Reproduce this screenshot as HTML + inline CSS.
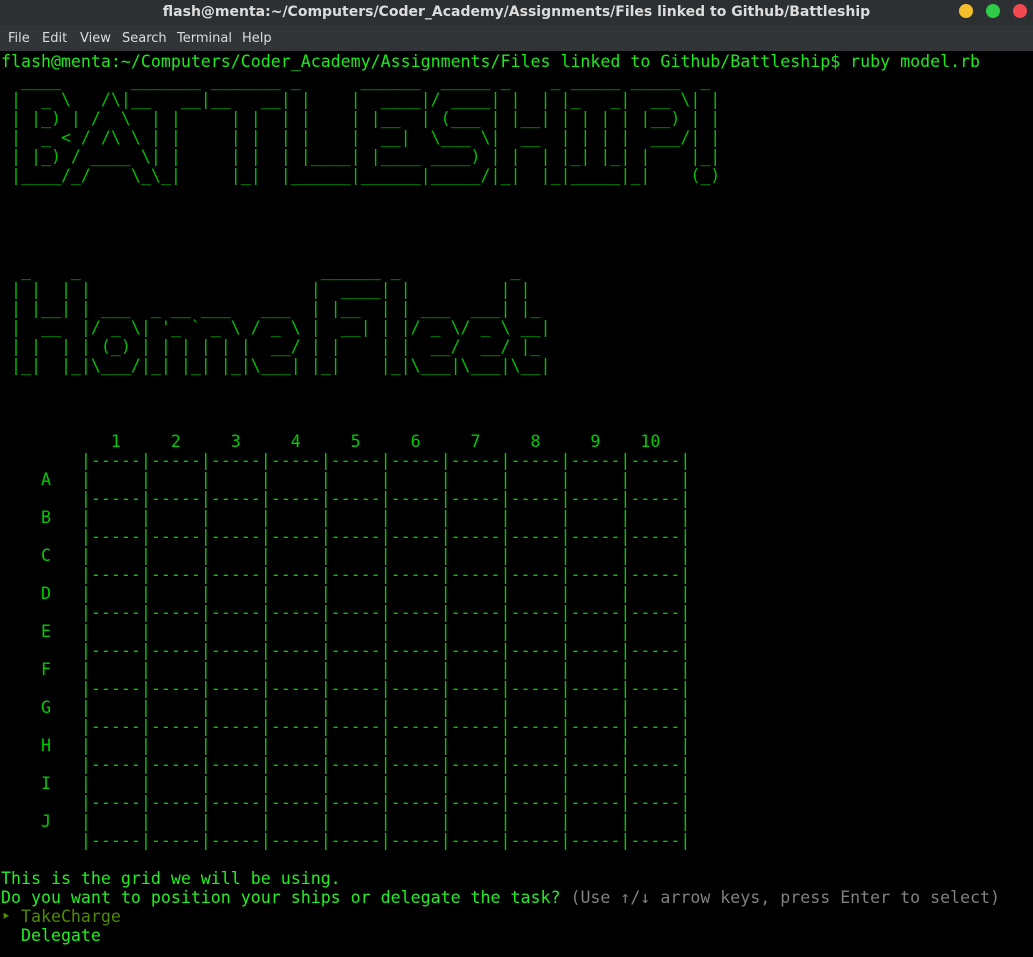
<!DOCTYPE html>
<html><head><meta charset="utf-8"><style>
*{margin:0;padding:0;box-sizing:border-box}
body{width:1033px;height:957px;background:#000;overflow:hidden;font-family:"DejaVu Sans Mono","Liberation Mono",monospace}
.title{position:absolute;left:0;top:0;width:1033px;height:25px;background:#2d3033;color:#dcdcdc;font:bold 14px "DejaVu Sans","Liberation Sans",sans-serif;text-align:center;line-height:25px}
.dot{position:absolute;top:4px;width:14px;height:14px;border-radius:50%}
.menu{position:absolute;left:0;top:25px;width:1033px;height:26px;background:#323538;color:#dcdcdc;font:13px "DejaVu Sans","Liberation Sans",sans-serif}
.menu span{position:absolute;top:6px}
pre{position:absolute;left:1px;top:52px;font-family:"DejaVu Sans Mono","Liberation Mono",monospace;font-size:16.6px;line-height:19px;color:#00cc00;white-space:pre}
.p{color:#1ee81e}.t{color:#22ee22}.g{color:#808080}.o{color:#4f8a00}.a{color:#00c000}
</style></head><body>
<div class="title">flash@menta:~/Computers/Coder_Academy/Assignments/Files linked to Github/Battleship</div>
<div class="dot" style="left:959px;background:#f5be2a"></div>
<div class="dot" style="left:986px;background:#2fcc48"></div>
<div class="dot" style="left:1013px;background:#f04a50"></div>
<div class="menu"><span style="left:8px">File</span><span style="left:42px">Edit</span><span style="left:80px">View</span><span style="left:122px">Search</span><span style="left:177px">Terminal</span><span style="left:242px">Help</span></div>
<pre><span class="p">flash@menta:~/Computers/Coder_Academy/Assignments/Files linked to Github/Battleship$ ruby model.rb</span>
<span class="a">  ____       _______ _______ _      ______  _____ _    _ _____ _____  _ 
 |  _ \   /\|__   __|__   __| |    |  ____|/ ____| |  | |_   _|  __ \| |
 | |_) | /  \  | |     | |  | |    | |__  | (___ | |__| | | | | |__) | |
 |  _ &lt; / /\ \ | |     | |  | |    |  __|  \___ \|  __  | | | |  ___/| |
 | |_) / ____ \| |     | |  | |____| |____ ____) | |  | |_| |_| |    |_|
 |____/_/    \_\_|     |_|  |______|______|_____/|_|  |_|_____|_|    (_)</span>




<span class="a">  _    _                        ______ _           _   
 | |  | |                      |  ____| |         | |  
 | |__| | ___  _ __ ___   ___  | |__  | | ___  ___| |_ 
 |  __  |/ _ \| '_ ` _ \ / _ \ |  __| | |/ _ \/ _ \ __|
 | |  | | (_) | | | | | |  __/ | |    | |  __/  __/ |_ 
 |_|  |_|\___/|_| |_| |_|\___| |_|    |_|\___|\___|\__|</span>



           1     2     3     4     5     6     7     8     9    10
        |-----|-----|-----|-----|-----|-----|-----|-----|-----|-----|
    A   |     |     |     |     |     |     |     |     |     |     |
        |-----|-----|-----|-----|-----|-----|-----|-----|-----|-----|
    B   |     |     |     |     |     |     |     |     |     |     |
        |-----|-----|-----|-----|-----|-----|-----|-----|-----|-----|
    C   |     |     |     |     |     |     |     |     |     |     |
        |-----|-----|-----|-----|-----|-----|-----|-----|-----|-----|
    D   |     |     |     |     |     |     |     |     |     |     |
        |-----|-----|-----|-----|-----|-----|-----|-----|-----|-----|
    E   |     |     |     |     |     |     |     |     |     |     |
        |-----|-----|-----|-----|-----|-----|-----|-----|-----|-----|
    F   |     |     |     |     |     |     |     |     |     |     |
        |-----|-----|-----|-----|-----|-----|-----|-----|-----|-----|
    G   |     |     |     |     |     |     |     |     |     |     |
        |-----|-----|-----|-----|-----|-----|-----|-----|-----|-----|
    H   |     |     |     |     |     |     |     |     |     |     |
        |-----|-----|-----|-----|-----|-----|-----|-----|-----|-----|
    I   |     |     |     |     |     |     |     |     |     |     |
        |-----|-----|-----|-----|-----|-----|-----|-----|-----|-----|
    J   |     |     |     |     |     |     |     |     |     |     |
        |-----|-----|-----|-----|-----|-----|-----|-----|-----|-----|

<span class="t">This is the grid we will be using.
Do you want to position your ships or delegate the task? </span><span class="g">(Use ↑/↓ arrow keys, press Enter to select)</span>
<span class="o">‣ TakeCharge</span>
<span class="t">  Delegate</span></pre>
</body></html>
